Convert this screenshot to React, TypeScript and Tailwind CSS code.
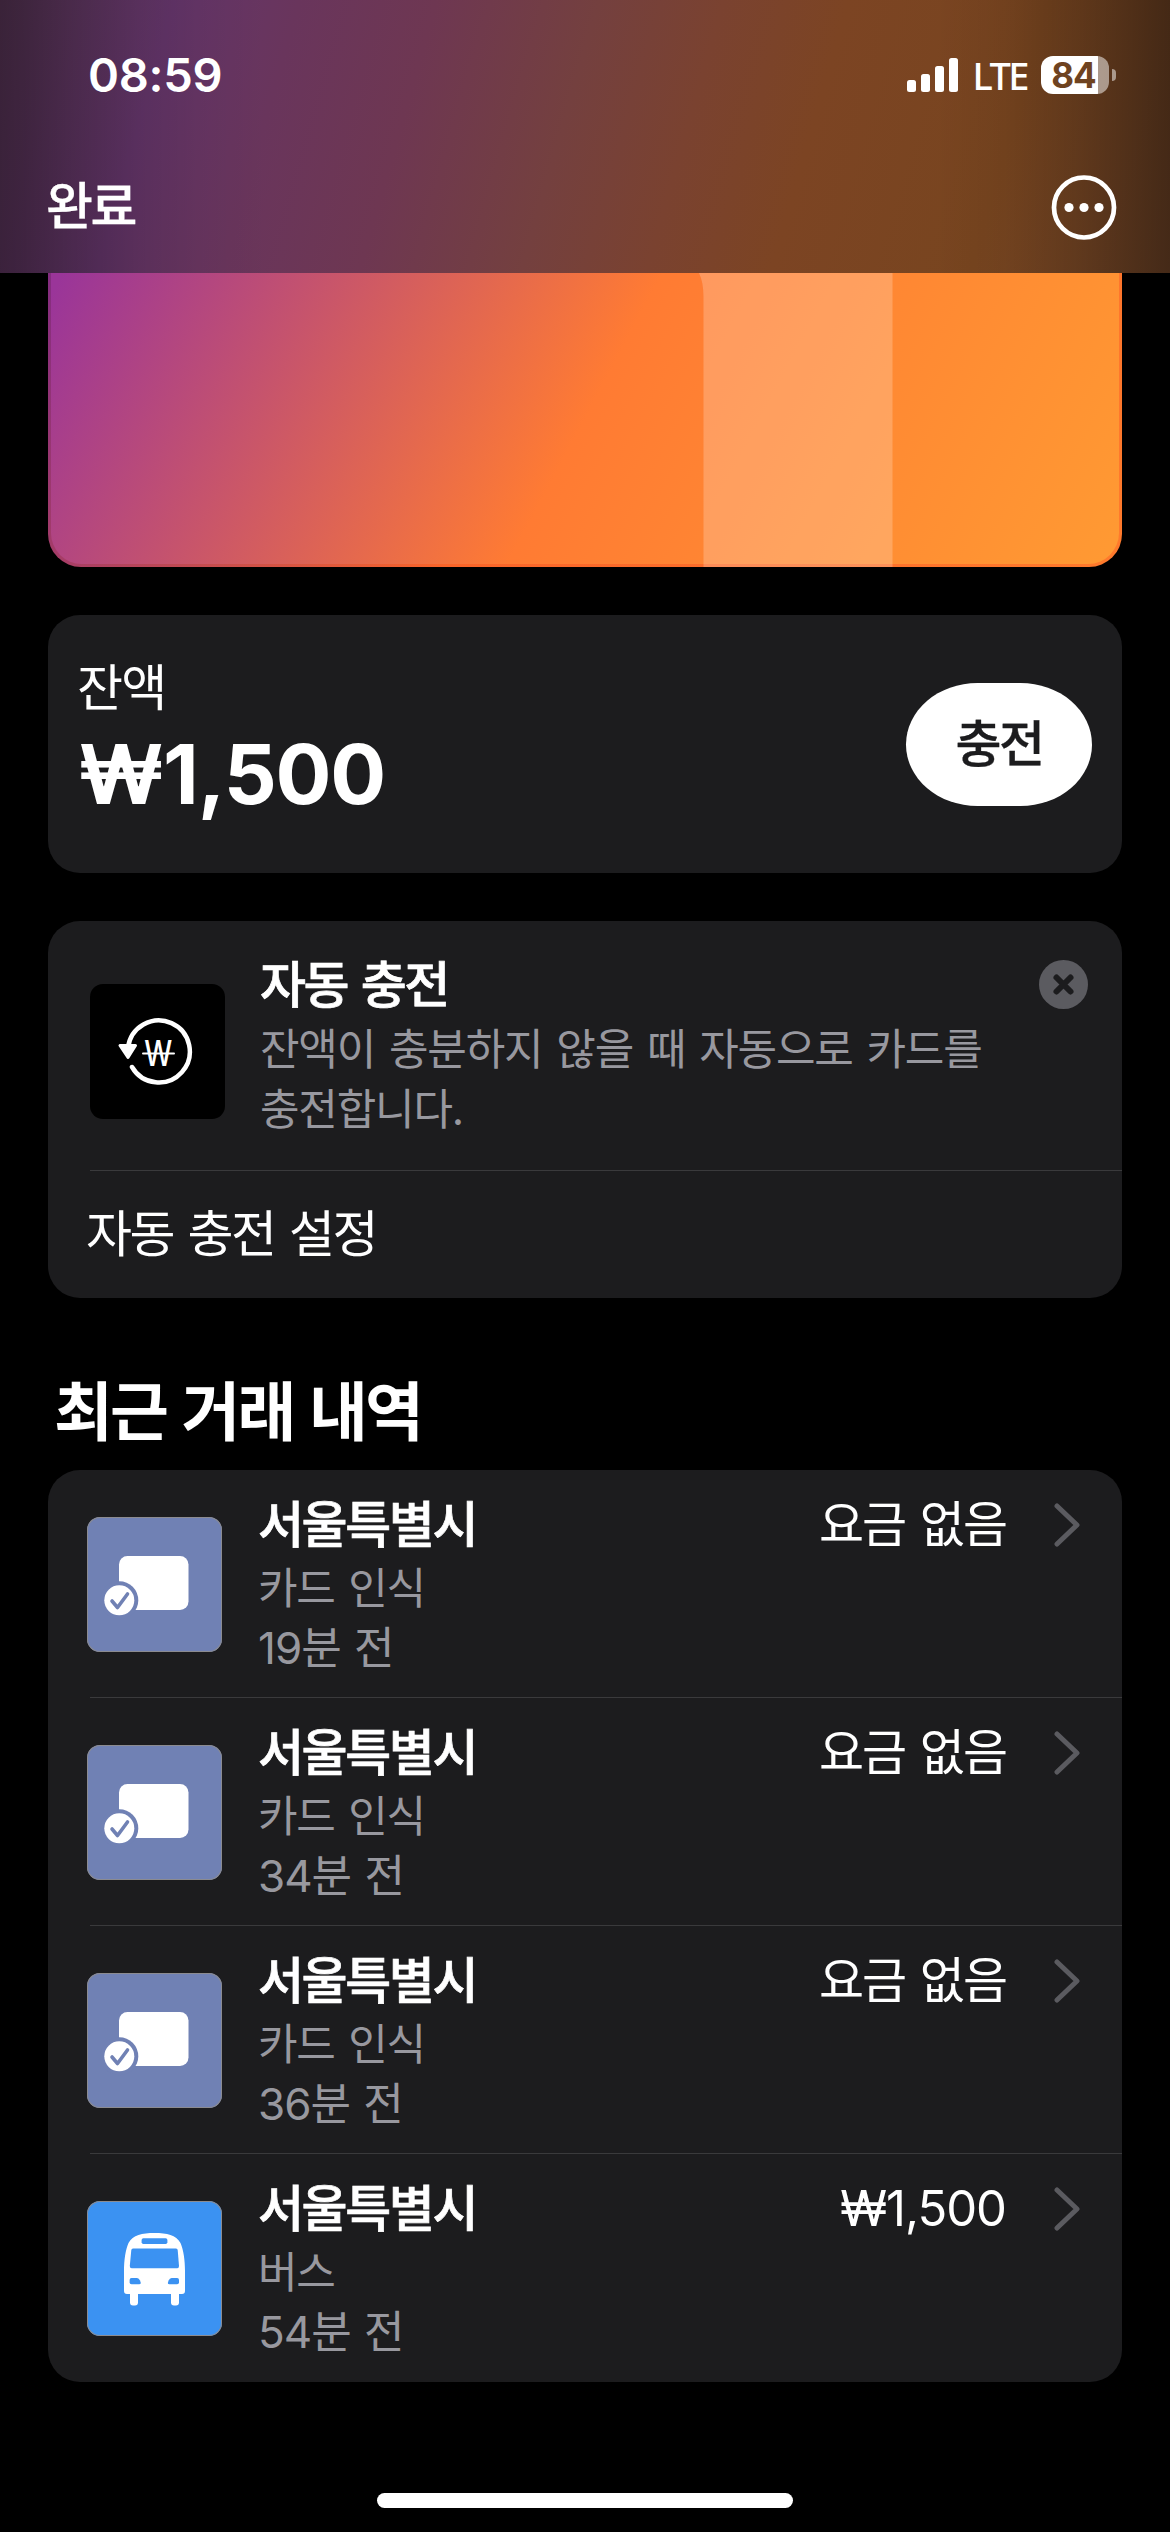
import React from 'react';

type Kind = 'tap' | 'bus';

const transactions: { kind: Kind; title: string; detail: string; time: string; amount: string }[] = [
  { kind: 'tap', title: '서울특별시', detail: '카드 인식', time: '19분 전', amount: '요금 없음' },
  { kind: 'tap', title: '서울특별시', detail: '카드 인식', time: '34분 전', amount: '요금 없음' },
  { kind: 'tap', title: '서울특별시', detail: '카드 인식', time: '36분 전', amount: '요금 없음' },
  { kind: 'bus', title: '서울특별시', detail: '버스', time: '54분 전', amount: '₩1,500' },
];

function SignalIcon() {
  return (
    <svg width="51" height="34" viewBox="0 0 51 34" fill="#fff">
      <rect x="0" y="22" width="9" height="12" rx="2.5" />
      <rect x="14" y="16" width="9" height="18" rx="2.5" />
      <rect x="28" y="8" width="9" height="26" rx="2.5" />
      <rect x="42" y="0" width="9" height="34" rx="2.5" />
    </svg>
  );
}

function Battery() {
  return (
    <div className="flex items-center gap-[3px]">
      <div className="flex h-[38px] w-[68px] items-center justify-center rounded-[12px] bg-[linear-gradient(90deg,#fff_57px,#ffffff80_57px)] pr-[3px]">
        <span className="text-[35px] leading-none font-bold tracking-[-1px] text-[#6f431f]">84</span>
      </div>
      <div className="h-[12px] w-[4px] rounded-r-full bg-white/50" />
    </div>
  );
}

function MoreIcon() {
  return (
    <svg width="66" height="66" viewBox="0 0 66 66">
      <circle cx="33" cy="32.5" r="30" fill="none" stroke="#fff" strokeWidth="4.7" />
      <circle cx="18" cy="32.5" r="4.6" fill="#fff" />
      <circle cx="33" cy="32.5" r="4.6" fill="#fff" />
      <circle cx="48" cy="32.5" r="4.6" fill="#fff" />
    </svg>
  );
}

function ReloadIcon() {
  return (
    <svg width="135" height="135" viewBox="0 0 135 135">
      <path d="M38 64 A31 31 0 1 1 42 83" fill="none" stroke="#fff" strokeWidth="4.5" strokeLinecap="round" />
      <path d="M30 61.5 H45.5 L38 73.5 Z" fill="#fff" stroke="#fff" strokeWidth="3" strokeLinejoin="round" />
      <text x="68.3" y="82" fill="#fff" fontSize="35" fontWeight="500" textAnchor="middle" textLength="28" lengthAdjust="spacingAndGlyphs">
        W
      </text>
      <path d="M53 69.5 H84" stroke="#fff" strokeWidth="2" strokeLinecap="round" />
    </svg>
  );
}

function TapIcon() {
  return (
    <svg width="135" height="135" viewBox="0 0 135 135">
      <rect x="32" y="39" width="69.5" height="54" rx="8.5" fill="#fff" />
      <circle cx="32.3" cy="83.3" r="19" fill="#7081b4" />
      <circle cx="32.3" cy="83.3" r="15" fill="#fff" />
      <path d="M25 84 L30.5 90.5 L40.5 77" fill="none" stroke="#7081b4" strokeWidth="3.6" strokeLinecap="round" strokeLinejoin="round" />
    </svg>
  );
}

function BusIcon() {
  return (
    <svg width="135" height="135" viewBox="0 0 135 135">
      <path
        d="M67.5 32 C80 32 89 34 93.5 42 C96.5 49 98 59 98 70 V90 Q98 93 95 93 H92 V101.5 Q92 104.5 89 104.5 H87 Q84 104.5 84 101.5 V93 H51 V101.5 Q51 104.5 48 104.5 H46 Q43 104.5 43 101.5 V93 H40 Q37 93 37 90 V70 C37 59 38.5 49 41.5 42 C46 34 55 32 67.5 32 Z"
        fill="#fff"
      />
      <rect x="54.6" y="37.3" width="25.8" height="5.8" rx="1.8" fill="#3b92f2" />
      <path d="M46 47.5 H89 Q90.5 47.5 90.7 49 L92 65 Q92 67.2 90.3 67.2 H44.7 Q42.8 67.2 42.8 65 L44.3 49 Q44.5 47.5 46 47.5 Z" fill="#3b92f2" />
      <path d="M44.5 77 H50 Q52 77 53 79.5 L53.8 82 Q53.8 83.3 52 83.3 H44.5 Q42.6 83.3 42.6 81.5 V79 Q42.6 77 44.5 77 Z" fill="#3b92f2" />
      <path d="M90.1 77 H84.6 Q82.6 77 81.6 79.5 L80.8 82 Q80.8 83.3 82.6 83.3 H90.1 Q92 83.3 92 81.5 V79 Q92 77 90.1 77 Z" fill="#3b92f2" />
    </svg>
  );
}

function Header() {
  return (
    <header className="flex h-[273px] shrink-0 flex-col bg-[linear-gradient(90deg,#00000066_0%,#0000005c_2%,#00000040_6%,#0000001c_12%,#0000000a_17%,#00000000_23%,#00000000_80%,#00000010_86%,#00000034_92%,#00000070_100%),linear-gradient(106deg,#603a5e_0%,#64356a_14%,#69355c_24%,#6e3752_35%,#74403f_48%,#7a4230_58%,#7c4423_68%,#78451f_84%,#7a4a2a_100%)]">
      <div className="flex h-[150px] items-center justify-between pr-[54px] pl-[88px]">
        <span className="text-[47px] font-semibold tracking-[-0.3px]">08:59</span>
        <div className="flex items-center">
          <SignalIcon />
          <span className="mr-[14px] ml-[14px] font-['Noto_Sans'] text-[38px] leading-none font-medium tracking-[-2.5px]">LTE</span>
          <Battery />
        </div>
      </div>
      <div className="flex h-[115px] items-center justify-between pr-[53px] pl-[46px]">
        <button className="text-[51px] font-medium tracking-[-2.5px] [-webkit-text-stroke:0.3px_#fff]">완료</button>
        <button><MoreIcon /></button>
      </div>
    </header>
  );
}

function TransitCard() {
  return (
    <div className="relative h-[294px] overflow-hidden rounded-b-[33px] bg-[linear-gradient(118deg,#832c80_0%,#f9652a_45%,#ff7a2c_100%)] px-[3px] pb-[3px]">
      <div className="h-full rounded-b-[31px] bg-[linear-gradient(118deg,#9a3599_1%,#ff7b33_50%,#ff9a33_100%)]" />
      {/* lighter vertical band of the card art */}
      <svg className="absolute top-0 left-[651px]" width="194" height="294" viewBox="0 0 194 294">
        <path d="M0 0 C3 6 4.5 14 4.5 24 V294 H193.5 V0 Z" fill="#fff" fillOpacity="0.22" />
      </svg>
    </div>
  );
}

export default function App() {
  return (
    <div className="flex h-[2532px] w-[1170px] flex-col overflow-hidden bg-black font-['Inter','Noto_Sans_CJK_KR',sans-serif] text-white">
      <Header />

      <main className="flex grow flex-col px-[48px]">
        <TransitCard />

        <section className="mt-[48px] flex h-[258px] items-center justify-between rounded-[32px] bg-[#1c1c1e] px-[30px]">
          <div>
            <div className="-ml-[1px] text-[50px] leading-[60px] tracking-[-1.8px]">잔액</div>
            <div className="text-[83px] leading-[112px] font-bold tracking-[-1.2px]">₩1,500</div>
          </div>
          <button className="h-[123px] w-[186px] rounded-[72px/62px] bg-white text-[50px] font-medium tracking-[-2.5px] text-[#1c1c1e] [-webkit-text-stroke:0.3px_#1c1c1e]">
            충전
          </button>
        </section>

        <section className="mt-[48px] h-[377px] rounded-[32px] bg-[#1c1c1e] pl-[42px]">
          <div className="flex h-[250px] border-b border-[#3a3a3c]">
            <div className="mt-[63px] h-[135px] w-[135px] rounded-[13px] bg-black">
              <ReloadIcon />
            </div>
            <div className="ml-[35px] grow pt-[31px]">
              <h2 className="text-[50px] leading-[66px] font-medium tracking-[-2.5px] [word-spacing:3px] [-webkit-text-stroke:0.7px_#fff]">자동 충전</h2>
              <p className="pt-px text-[43px] leading-[60px] tracking-[-1.2px] text-[#98989f] [word-spacing:3px]">
                잔액이 충분하지 않을 때 자동으로 카드를
                <br />
                충전합니다.
              </p>
            </div>
            <button className="mt-[39px] mr-[34px] h-[49px] w-[49px]">
              <svg width="49" height="49" viewBox="0 0 49 49">
                <circle cx="24.5" cy="24.5" r="24.5" fill="#5b5b60" />
                <path d="M17.5 17.5 L31.5 31.5 M31.5 17.5 L17.5 31.5" stroke="#1c1c1e" strokeWidth="6" strokeLinecap="round" />
              </svg>
            </button>
          </div>
          <div className="-ml-[4px] flex h-[127px] items-center text-[50px] tracking-[-2.5px] [word-spacing:3px]">자동 충전 설정</div>
        </section>

        <h1 className="mt-[62px] mb-[6px] pl-[6px] text-[64px] leading-[104px] font-bold tracking-[-2.8px] [word-spacing:3px]">최근 거래 내역</h1>

        <section className="h-[912px] rounded-[32px] bg-[#1c1c1e] pl-[39px]">
          {transactions.map((item, i) => (
            <div key={item.time}>
              <div className="flex h-[227px]">
                <div
                  className={`mt-[47px] h-[135px] w-[135px] shrink-0 overflow-hidden rounded-[13px] shadow-[inset_0_0_0_1px_#8b8b90] ${
                    item.kind === 'bus' ? 'bg-[#3b92f2]' : 'bg-[#7081b4]'
                  }`}
                >
                  {item.kind === 'bus' ? <BusIcon /> : <TapIcon />}
                </div>
                <div className="ml-[36px] w-[400px] pt-[22px]">
                  <h3 className="text-[50px] leading-[66px] font-medium tracking-[-2.4px] [-webkit-text-stroke:0.7px_#fff]">{item.title}</h3>
                  <p className="text-[43px] leading-[60px] tracking-[-1.3px] text-[#98989f] [word-spacing:3px]">{item.detail}</p>
                  <p className="text-[44px] leading-[60px] tracking-[-1px] text-[#98989f] [word-spacing:2px]">{item.time}</p>
                </div>
                <div className="flex grow justify-end pt-[22px] pr-[42px]">
                  <span
                    className={`text-[49px] leading-[66px] [word-spacing:3px] ${
                      item.kind === 'bus' ? 'tracking-[-1px]' : 'tracking-[-2px]'
                    }`}
                  >
                    {item.amount}
                  </span>
                  <svg className="mt-[11px] ml-[48px]" width="26" height="44" viewBox="0 0 26 44">
                    <path d="M3 3 L23 22 L3 41" fill="none" stroke="#5b5b60" strokeWidth="5" strokeLinecap="round" strokeLinejoin="round" />
                  </svg>
                </div>
              </div>
              <div className={`ml-[3px] h-px ${i < transactions.length - 1 ? 'bg-[#3a3a3c]' : ''}`} />
            </div>
          ))}
        </section>

        <div className="mt-[111px] h-[15px] w-[416px] self-center rounded-full bg-white" />
      </main>
    </div>
  );
}
